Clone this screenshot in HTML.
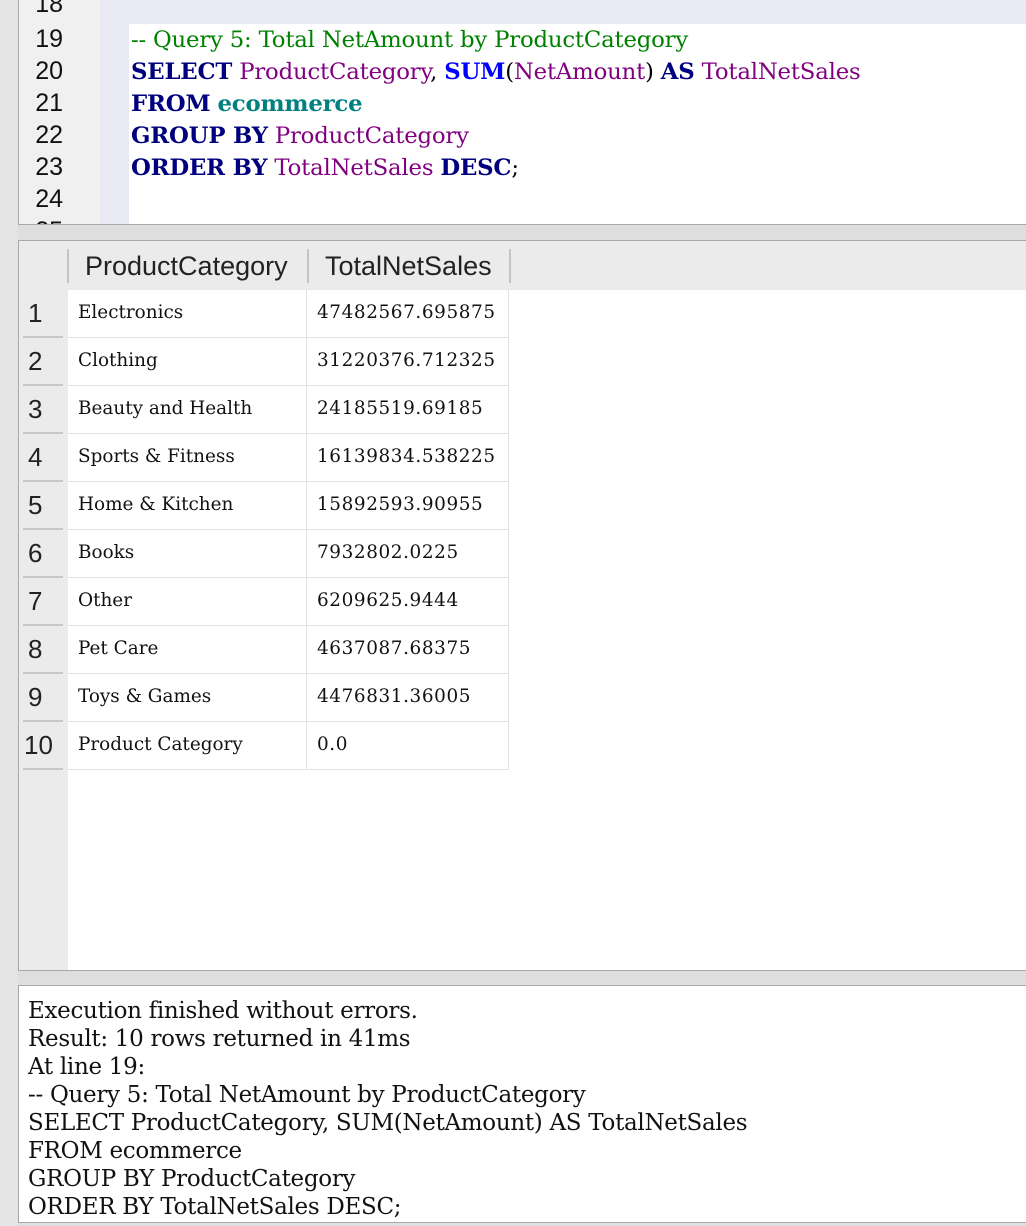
<!DOCTYPE html>
<html><head><meta charset="utf-8"><style>
*{margin:0;padding:0;box-sizing:border-box}
body{width:1026px;height:1226px;background:#dedede;position:relative;overflow:hidden;font-family:"DejaVu Serif","Liberation Serif",serif}
.abs{position:absolute}
#editor{left:18px;top:0;width:1008px;height:225px;background:#fff;border-left:1px solid #a8a8a8;border-bottom:1px solid #a8a8a8;overflow:hidden}
#gutter{left:0;top:0;width:81px;height:224px;background:#f0f0f0}
#fold{left:81px;top:0;width:29px;height:224px;background:#e9e9f3}
#cur{left:110px;top:0;width:900px;height:24px;background:#e9e9f3}
.ln{position:absolute;left:0;width:44px;text-align:right;font-family:"Liberation Sans",sans-serif;font-size:25px;color:#111}
.code{position:absolute;left:112px;font-size:22.8px;white-space:pre;letter-spacing:-0.2px}
.kw{color:#00007f;font-weight:bold}.fn{color:#0000ff;font-weight:bold}.id{color:#800080}.tb{color:#008080;font-weight:bold}.cm{color:#008000}
#res{left:18px;top:240px;width:1008px;height:731px;background:#fff;border-left:1px solid #a8a8a8;border-top:1px solid #a8a8a8;border-bottom:1px solid #a8a8a8}
#hdr{left:0;top:0;width:1008px;height:49px;background:#ebebeb}
#rn{left:0;top:49px;width:49px;height:680px;background:#ebebeb}
.h{position:absolute;top:8px;height:34px;border-left:2px solid #c4c4c4;font-family:"Liberation Sans",sans-serif;font-size:27px;color:#222;line-height:34px;padding-left:16px}
.rnum{position:absolute;left:4px;width:40px;height:48px;border-bottom:2px solid #c8c8c8;font-family:"Liberation Sans",sans-serif;font-size:26px;color:#222;line-height:46px;padding-left:5px}
.c{position:absolute;height:48px;border-right:1px solid #e2e2e2;border-bottom:1px solid #e2e2e2;font-size:18.4px;line-height:46px;padding-left:10px;color:#111}
.n{letter-spacing:0.6px}
#msg{left:18px;top:985px;width:1008px;height:238px;background:#fff;border:1px solid #a8a8a8;border-right:none}
.m{position:absolute;left:9px;font-size:23px;white-space:pre;color:#111;letter-spacing:-0.3px}
</style></head><body>
<div class="abs" style="left:0;top:0;width:18px;height:1226px;background:#e4e4e4"></div>
<div id="editor" class="abs">
 <div id="gutter" class="abs"></div>
 <div id="fold" class="abs"></div>
 <div id="cur" class="abs"></div>
 <div class="ln" style="top:-10px">18</div>
 <div class="ln" style="top:25px">19</div>
 <div class="ln" style="top:57px">20</div>
 <div class="ln" style="top:89px">21</div>
 <div class="ln" style="top:121px">22</div>
 <div class="ln" style="top:153px">23</div>
 <div class="ln" style="top:185px">24</div>
 <div class="ln" style="top:217px">25</div>
 <div class="code cm" style="top:27px">-- Query 5: Total NetAmount by ProductCategory</div>
 <div class="code" style="top:59px"><span class="kw">SELECT</span> <span class="id">ProductCategory</span>, <span class="fn">SUM</span>(<span class="id">NetAmount</span>) <span class="kw">AS</span> <span class="id">TotalNetSales</span></div>
 <div class="code" style="top:91px"><span class="kw">FROM</span> <span class="tb">ecommerce</span></div>
 <div class="code" style="top:123px"><span class="kw">GROUP BY</span> <span class="id">ProductCategory</span></div>
 <div class="code" style="top:155px"><span class="kw">ORDER BY</span> <span class="id">TotalNetSales</span> <span class="kw">DESC</span>;</div>
</div>
<div id="res" class="abs">
 <div id="hdr" class="abs"></div>
 <div id="rn" class="abs"></div>
 <div class="h" style="left:48px;width:240px">ProductCategory</div>
 <div class="h" style="left:288px;width:202px">TotalNetSales</div>
 <div class="abs" style="left:490px;top:8px;width:2px;height:34px;background:#c4c4c4"></div>
 <div class="rnum" style="top:49px">1</div><div class="c" style="top:49px;left:49px;width:239px">Electronics</div><div class="c n" style="top:49px;left:288px;width:202px">47482567.695875</div>
 <div class="rnum" style="top:97px">2</div><div class="c" style="top:97px;left:49px;width:239px">Clothing</div><div class="c n" style="top:97px;left:288px;width:202px">31220376.712325</div>
 <div class="rnum" style="top:145px">3</div><div class="c" style="top:145px;left:49px;width:239px">Beauty and Health</div><div class="c n" style="top:145px;left:288px;width:202px">24185519.69185</div>
 <div class="rnum" style="top:193px">4</div><div class="c" style="top:193px;left:49px;width:239px">Sports &amp; Fitness</div><div class="c n" style="top:193px;left:288px;width:202px">16139834.538225</div>
 <div class="rnum" style="top:241px">5</div><div class="c" style="top:241px;left:49px;width:239px">Home &amp; Kitchen</div><div class="c n" style="top:241px;left:288px;width:202px">15892593.90955</div>
 <div class="rnum" style="top:289px">6</div><div class="c" style="top:289px;left:49px;width:239px">Books</div><div class="c n" style="top:289px;left:288px;width:202px">7932802.0225</div>
 <div class="rnum" style="top:337px">7</div><div class="c" style="top:337px;left:49px;width:239px">Other</div><div class="c n" style="top:337px;left:288px;width:202px">6209625.9444</div>
 <div class="rnum" style="top:385px">8</div><div class="c" style="top:385px;left:49px;width:239px">Pet Care</div><div class="c n" style="top:385px;left:288px;width:202px">4637087.68375</div>
 <div class="rnum" style="top:433px">9</div><div class="c" style="top:433px;left:49px;width:239px">Toys &amp; Games</div><div class="c n" style="top:433px;left:288px;width:202px">4476831.36005</div>
 <div class="rnum" style="top:481px;padding-left:1px">10</div><div class="c" style="top:481px;left:49px;width:239px">Product Category</div><div class="c n" style="top:481px;left:288px;width:202px">0.0</div>
</div>
<div id="msg" class="abs">
 <div class="m" style="top:12px">Execution finished without errors.</div>
 <div class="m" style="top:40px">Result: 10 rows returned in 41ms</div>
 <div class="m" style="top:68px">At line 19:</div>
 <div class="m" style="top:96px">-- Query 5: Total NetAmount by ProductCategory</div>
 <div class="m" style="top:124px">SELECT ProductCategory, SUM(NetAmount) AS TotalNetSales</div>
 <div class="m" style="top:152px">FROM ecommerce</div>
 <div class="m" style="top:180px">GROUP BY ProductCategory</div>
 <div class="m" style="top:208px">ORDER BY TotalNetSales DESC;</div>
</div>
</body></html>
